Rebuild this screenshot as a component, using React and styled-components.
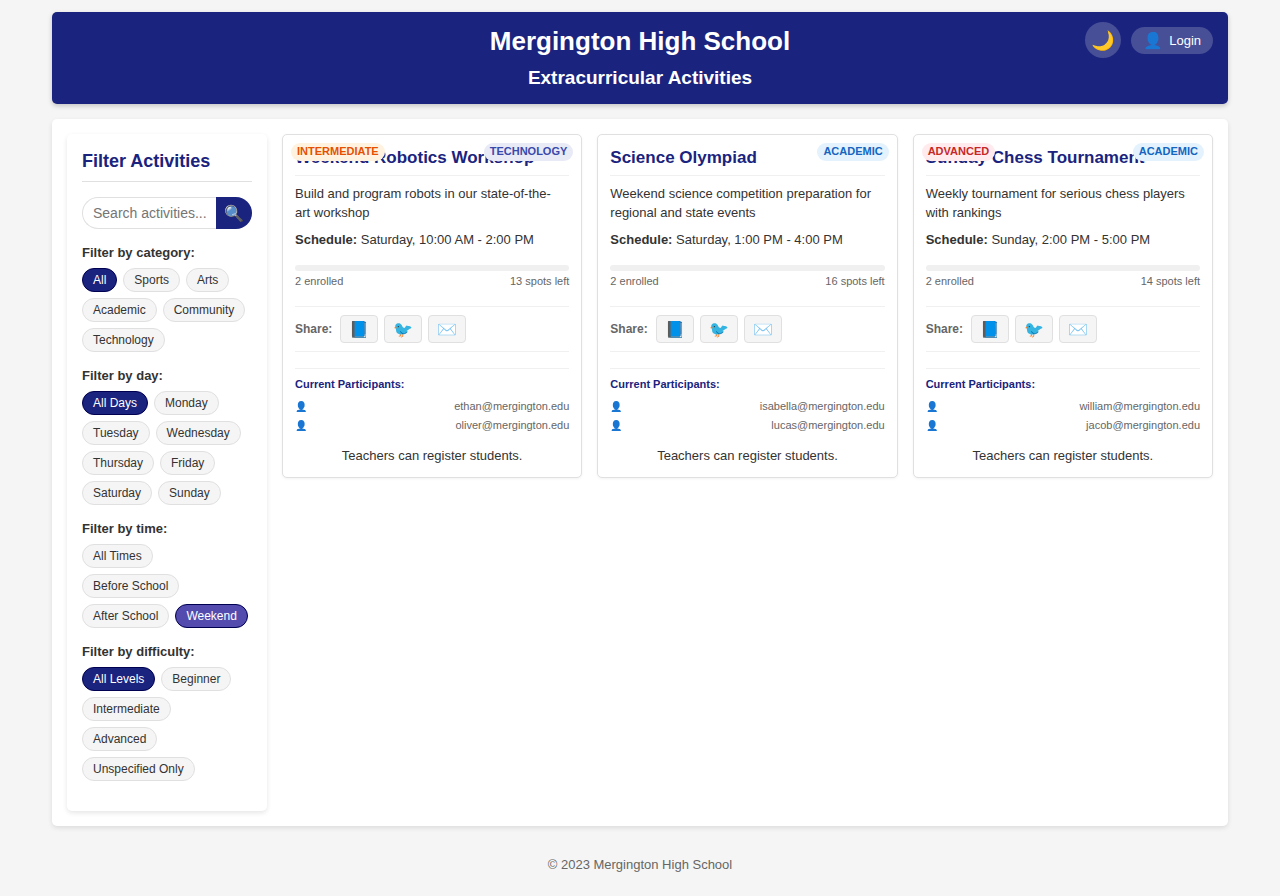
import React, { useState } from "react";
import styled, { createGlobalStyle, css } from "styled-components";

const GlobalStyle = createGlobalStyle`
  * { box-sizing: border-box; margin: 0; padding: 0; }
  body {
    background: #f5f5f5;
    color: #333;
    font-family: "Liberation Sans", Arial, sans-serif;
    font-size: 13px;
    line-height: 19px;
  }
  button, input { font-family: inherit; }
  button { cursor: pointer; }
`;

const Page = styled.div`
  max-width: 1200px;
  margin: 0 auto;
  padding: 12px;
`;

const Header = styled.header`
  display: grid;
  grid-template-columns: 1fr auto 1fr;
  padding: 10px 15px 13px;
  margin-bottom: 15px;
  border-radius: 5px;
  background: #1a237e;
  color: #fff;
  box-shadow: 0 2px 5px rgba(0, 0, 0, 0.2);
`;

const Titles = styled.div`
  grid-column: 2;
  text-align: center;
`;

const SchoolName = styled.h1`
  margin-bottom: 5px;
  font-size: 26px;
  line-height: 38px;
`;

const Subtitle = styled.h2`
  font-size: 19px;
  line-height: 26px;
`;

const Controls = styled.div`
  display: flex;
  align-items: center;
  justify-content: flex-end;
  gap: 10px;
  height: 36px;
`;

const ThemeButton = styled.button`
  width: 36px;
  height: 36px;
  border: 0;
  border-radius: 50%;
  background: rgba(255, 255, 255, 0.2);
  color: #fff;
  font-size: 19px;
`;

const LoginButton = styled.button`
  display: flex;
  align-items: center;
  gap: 6px;
  height: 27px;
  padding: 0 12px;
  border: 0;
  border-radius: 20px;
  background: rgba(255, 255, 255, 0.2);
  color: #fff;
  font-size: 13px;
`;

const LoginIcon = styled.span`
  font-size: 16px;
`;

const Main = styled.main`
  display: grid;
  grid-template-columns: 200px 1fr;
  gap: 15px;
  padding: 15px;
  border-radius: 5px;
  background: #fff;
  box-shadow: 0 2px 5px rgba(0, 0, 0, 0.1);
`;

const Sidebar = styled.aside`
  padding: 15px 15px 16px;
  border-radius: 5px;
  background: #fff;
  box-shadow: 0 2px 5px rgba(0, 0, 0, 0.1);
`;

const SidebarTitle = styled.h3`
  margin-bottom: 15px;
  padding-bottom: 8px;
  border-bottom: 1px solid #e0e0e0;
  color: #1a237e;
  font-size: 18px;
  line-height: 24px;
`;

const SearchForm = styled.form`
  display: flex;
  height: 32px;
  margin-bottom: 14px;
`;

const SearchInput = styled.input`
  flex: 1;
  min-width: 0;
  padding: 0 0 0 10px;
  border: 1px solid #e0e0e0;
  border-right: 0;
  border-radius: 20px 0 0 20px;
  background: #fff;
  font-size: 14px;
  &::placeholder { color: #757575; }
`;

const SearchButton = styled.button`
  width: 36px;
  border: 0;
  border-radius: 0 20px 20px 0;
  background: #1a237e;
  color: #fff;
  font-size: 16px;
`;

const FilterGroup = styled.section`
  margin-bottom: 14px;
`;

const FilterLabel = styled.h4`
  margin-bottom: 6px;
  font-size: 13px;
`;

const Chips = styled.div`
  display: flex;
  flex-wrap: wrap;
  gap: 6px;
`;

const Chip = styled.button`
  height: 24px;
  padding: 0 10px;
  border: 1px solid #e0e0e0;
  border-radius: 20px;
  background: #f5f5f5;
  color: #333;
  font-size: 12px;
  ${({ $active, $accent }) => $active && css`
    border-color: #000051;
    background: ${$accent ? "#534bae" : "#1a237e"};
    color: #fff;
  `}
`;

const CardGrid = styled.div`
  display: grid;
  grid-template-columns: repeat(auto-fill, minmax(280px, 1fr));
  align-items: start;
  gap: 15px;
`;

const Card = styled.article`
  position: relative;
  padding: 12px;
  border: 1px solid #e0e0e0;
  border-radius: 5px;
  background: #fff;
  box-shadow: 0 1px 3px rgba(0, 0, 0, 0.05);
`;

const tones = {
  Intermediate: ["#fff3e0", "#e65100"],
  Advanced: ["#ffebee", "#c62828"],
  Technology: ["#e8eaf6", "#3949ab"],
  Academic: ["#e3f2fd", "#1565c0"],
};

const Badge = styled.span`
  position: absolute;
  top: 8px;
  ${({ $side }) => $side}: 8px;
  padding: 0 6px 2px;
  border-radius: 10px;
  background: ${({ $tone }) => tones[$tone][0]};
  color: ${({ $tone }) => tones[$tone][1]};
  font-size: 11px;
  font-weight: bold;
  line-height: 16px;
  text-transform: uppercase;
`;

const CardTitle = styled.h4`
  margin-bottom: 8px;
  padding-bottom: 6px;
  border-bottom: 1px solid #f0f0f0;
  color: #1a237e;
  font-size: 17px;
  line-height: 22px;
`;

const Text = styled.p`
  margin-bottom: 8px;
  padding-right: 8px;
`;

const Capacity = styled.div`
  margin: 16px 0;
`;

const Track = styled.div`
  height: 6px;
  margin-bottom: 2px;
  border-radius: 3px;
  background: #f0f0f0;
`;

const CapacityText = styled.div`
  display: flex;
  justify-content: space-between;
  padding-bottom: 1px;
  color: #666;
  font-size: 11px;
  line-height: 16px;
`;

const ShareRow = styled.div`
  display: flex;
  align-items: center;
  gap: 6px;
  margin-bottom: 16px;
  padding: 8px 0;
  border-top: 1px solid #f0f0f0;
  border-bottom: 1px solid #f0f0f0;
`;

const ShareLabel = styled.span`
  margin-right: 2px;
  color: #666;
  font-size: 12px;
  font-weight: bold;
`;

const ShareButton = styled.button`
  width: 38px;
  height: 28px;
  border: 1px solid #e0e0e0;
  border-radius: 4px;
  background: #f5f5f5;
  font-size: 16px;
`;

const Participants = styled.section`
  margin-bottom: 11px;
  padding-top: 8px;
  border-top: 1px solid #f0f0f0;
  font-size: 11px;
`;

const ParticipantsTitle = styled.h5`
  margin-bottom: 5px;
  color: #1a237e;
  font-size: 11px;
  line-height: 15px;
`;

const ParticipantList = styled.ul`
  list-style: none;
`;

const Participant = styled.li`
  display: flex;
  align-items: center;
  justify-content: space-between;
  color: #666;
`;

const PersonIcon = styled.span`
  font-size: 10px;
`;

const Notice = styled.p`
  text-align: center;
`;

const Footer = styled.footer`
  margin-top: 15px;
  padding: 14px;
  color: #666;
  font-size: 13px;
  text-align: center;
`;

const filters = [
  { name: "category", options: ["All", "Sports", "Arts", "Academic", "Community", "Technology"], initial: "All" },
  { name: "day", options: ["All Days", "Monday", "Tuesday", "Wednesday", "Thursday", "Friday", "Saturday", "Sunday"], initial: "All Days" },
  { name: "time", options: ["All Times", "Before School", "After School", "Weekend"], initial: "Weekend" },
  { name: "difficulty", options: ["All Levels", "Beginner", "Intermediate", "Advanced", "Unspecified Only"], initial: "All Levels" },
];

const activities = [
  {
    title: "Weekend Robotics Workshop", level: "Intermediate", category: "Technology",
    description: "Build and program robots in our state-of-the-art workshop",
    schedule: "Saturday, 10:00 AM - 2:00 PM", spots: 13,
    people: ["ethan@mergington.edu", "oliver@mergington.edu"],
  },
  {
    title: "Science Olympiad", category: "Academic",
    description: "Weekend science competition preparation for regional and state events",
    schedule: "Saturday, 1:00 PM - 4:00 PM", spots: 16,
    people: ["isabella@mergington.edu", "lucas@mergington.edu"],
  },
  {
    title: "Sunday Chess Tournament", level: "Advanced", category: "Academic",
    description: "Weekly tournament for serious chess players with rankings",
    schedule: "Sunday, 2:00 PM - 5:00 PM", spots: 14,
    people: ["william@mergington.edu", "jacob@mergington.edu"],
  },
];

const shareTargets = [
  ["📘", "Share on Facebook"],
  ["🐦", "Share on Twitter"],
  ["✉️", "Share by email"],
];

function Filter({ name, options, initial }) {
  const [selected, setSelected] = useState(initial);
  return (
    <FilterGroup>
      <FilterLabel>Filter by {name}:</FilterLabel>
      <Chips>
        {options.map((option) => (
          <Chip
            key={option}
            type="button"
            aria-pressed={selected === option}
            $active={selected === option}
            $accent={name === "time"}
            onClick={() => setSelected(option)}
          >
            {option}
          </Chip>
        ))}
      </Chips>
    </FilterGroup>
  );
}

function ActivityCard({ activity }) {
  const { title, level, category, description, schedule, spots, people } = activity;
  return (
    <Card>
      <CardTitle>{title}</CardTitle>
      {level && <Badge $side="left" $tone={level}>{level}</Badge>}
      <Badge $side="right" $tone={category}>{category}</Badge>
      <Text>{description}</Text>
      <Text><strong>Schedule:</strong> {schedule}</Text>
      <Capacity>
        <Track />
        <CapacityText>
          <span>{people.length} enrolled</span>
          <span>{spots} spots left</span>
        </CapacityText>
      </Capacity>
      <ShareRow>
        <ShareLabel>Share:</ShareLabel>
        {shareTargets.map(([icon, label]) => (
          <ShareButton key={label} type="button" aria-label={label}>{icon}</ShareButton>
        ))}
      </ShareRow>
      <Participants>
        <ParticipantsTitle>Current Participants:</ParticipantsTitle>
        <ParticipantList>
          {people.map((email) => (
            <Participant key={email}>
              <PersonIcon>👤</PersonIcon>
              <span>{email}</span>
            </Participant>
          ))}
        </ParticipantList>
      </Participants>
      <Notice>Teachers can register students.</Notice>
    </Card>
  );
}

export default function App() {
  return (
    <>
      <GlobalStyle />
      <Page>
        <Header>
          <Titles>
            <SchoolName>Mergington High School</SchoolName>
            <Subtitle>Extracurricular Activities</Subtitle>
          </Titles>
          <Controls>
            <ThemeButton type="button" aria-label="Toggle dark mode">🌙</ThemeButton>
            <LoginButton type="button">
              <LoginIcon>👤</LoginIcon>
              <span>Login</span>
            </LoginButton>
          </Controls>
        </Header>
        <Main>
          <Sidebar>
            <SidebarTitle>Filter Activities</SidebarTitle>
            <SearchForm role="search" onSubmit={(event) => event.preventDefault()}>
              <SearchInput type="text" aria-label="Search activities" placeholder="Search activities..." />
              <SearchButton type="submit" aria-label="Search">🔍</SearchButton>
            </SearchForm>
            {filters.map((filter) => <Filter key={filter.name} {...filter} />)}
          </Sidebar>
          <CardGrid>
            {activities.map((activity) => <ActivityCard key={activity.title} activity={activity} />)}
          </CardGrid>
        </Main>
        <Footer>© 2023 Mergington High School</Footer>
      </Page>
    </>
  );
}
